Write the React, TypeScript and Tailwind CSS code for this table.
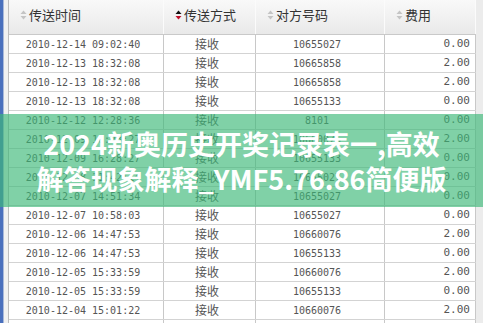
const rows: [string, string, string][] = [
  ["2010-12-14 09:02:40", "10655027", "0.00"],
  ["2010-12-13 18:32:08", "10665858", "2.00"],
  ["2010-12-13 18:32:08", "10665858", "2.00"],
  ["2010-12-13 18:32:08", "10655133", "0.00"],
  ["2010-12-12 12:28:36", "8101", "0.00"],
  ["2010-12-09 16:28:27", "10660076", "2.00"],
  ["2010-12-09 16:28:27", "10655133", "0.00"],
  ["2010-12-08 11:42:14", "10655027", "0.00"],
  ["2010-12-07 14:51:34", "10655027", "0.00"],
  ["2010-12-07 10:58:03", "10655027", "0.00"],
  ["2010-12-06 14:47:53", "10660076", "2.00"],
  ["2010-12-06 14:47:53", "10655133", "0.00"],
  ["2010-12-05 15:33:59", "10660076", "2.00"],
  ["2010-12-05 15:33:59", "10655133", "0.00"],
  ["2010-12-04 15:01:22", "10660076", "2.00"],
  ["", "", ""],
];

const cols = "grid grid-cols-[155px_92px_129px_91px]";
const mono = { fontFamily: '"DejaVu Sans Mono", "Liberation Mono", monospace' };
const cjk = { fontFamily: '"Noto Sans CJK SC", "Noto Sans", sans-serif' };

function SortIcon({ active }: { active?: boolean }) {
  return (
    <svg width="7" height="10" viewBox="0 0 7 10" className="mr-[2px] shrink-0">
      <path d="M3.5 0.5 L6.5 4 L0.5 4 Z" fill={active ? "#111" : "#c4c4c4"} />
      <path d="M3.5 9.5 L6.5 6 L0.5 6 Z" fill={active ? "#c0102a" : "#c4c4c4"} />
    </svg>
  );
}

function HeadCell({ label, active }: { label: string; active?: boolean }) {
  return (
    <div className="flex h-[34px] items-center border-r border-r-[#fbfbfb] pl-[11px] pb-[4px] text-[13px] text-[#333]" style={cjk}>
      <SortIcon active={active} />
      {label}
    </div>
  );
}

export default function App() {
  return (
    <div className="relative flex h-[323px] w-[483px] overflow-hidden bg-white">
      <div className="w-[3px] bg-[#4a70bd]" />
      <div className="w-[1px] bg-[#a9b9d9]" />
      <div className="w-[4px] bg-[#f1f1f1]" />
      <div className="w-[1px] bg-[#bdbdbd]" />

      <div className="flex w-[467px] flex-col">
        <div className={`${cols} border-b border-b-[#c9c9c9] bg-gradient-to-b from-[#f9f9f9] to-[#e9e9e9]`}>
          <HeadCell label="传送时间" />
          <HeadCell label="传送方式" active />
          <HeadCell label="对方号码" />
          <HeadCell label="费用" />
        </div>
        {rows.map((r, i) => (
          <div key={i} className={`${cols} h-[19px] shrink-0 border-b border-b-[#d3d3d3] text-[#555]`}>
            <div className="flex items-center justify-center border-r border-r-[#c8c8c8] pr-[6px] text-[10px]" style={mono}>
              {r[0]}
            </div>
            <div className="flex items-center justify-center border-r border-r-[#c8c8c8] pr-[5px] text-[12px]" style={cjk}>
              {r[0] ? "接收" : ""}
            </div>
            <div className="flex items-center justify-center border-r border-r-[#c8c8c8] pr-[6px] text-[10px]" style={mono}>
              {r[1]}
            </div>
            <div className="flex items-center justify-end border-r border-r-[#c8c8c8] pr-[5px] text-[11px]" style={mono}>
              {r[2]}
            </div>
          </div>
        ))}
      </div>

      <div className="flex-1 bg-[#ececec]" />

      <div className="absolute left-0 top-[114px] flex h-[93px] w-full flex-col items-center justify-center bg-[#3cb878]/65">
        <div className="text-[27px] font-bold leading-[35px] text-white" style={cjk}>
          2024新奥历史开奖记录表一,高效
        </div>
        <div className="text-[27px] font-bold leading-[35px] text-white" style={cjk}>
          解答现象解释_YMF5.76.86简便版
        </div>
      </div>
    </div>
  );
}
